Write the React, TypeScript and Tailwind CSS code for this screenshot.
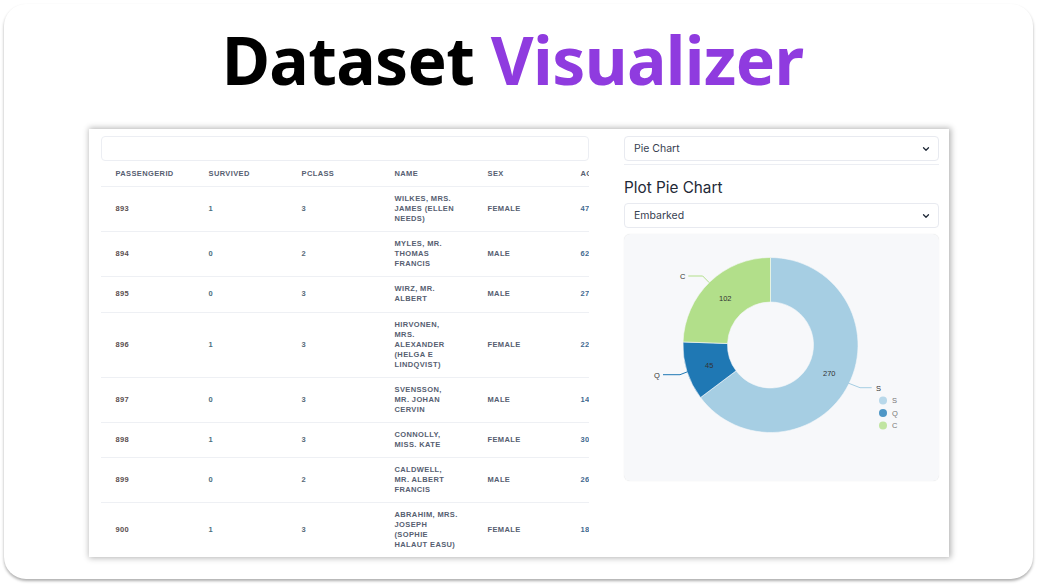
import { ChevronDown } from "lucide-react";

type Row = { id: number; survived: number; pclass: number; name: string[]; sex: string; age: number };

const rows: Row[] = [
  { id: 893, survived: 1, pclass: 3, name: ["WILKES, MRS.", "JAMES (ELLEN", "NEEDS)"], sex: "FEMALE", age: 47 },
  { id: 894, survived: 0, pclass: 2, name: ["MYLES, MR.", "THOMAS", "FRANCIS"], sex: "MALE", age: 62 },
  { id: 895, survived: 0, pclass: 3, name: ["WIRZ, MR.", "ALBERT"], sex: "MALE", age: 27 },
  { id: 896, survived: 1, pclass: 3, name: ["HIRVONEN,", "MRS.", "ALEXANDER", "(HELGA E", "LINDQVIST)"], sex: "FEMALE", age: 22 },
  { id: 897, survived: 0, pclass: 3, name: ["SVENSSON,", "MR. JOHAN", "CERVIN"], sex: "MALE", age: 14 },
  { id: 898, survived: 1, pclass: 3, name: ["CONNOLLY,", "MISS. KATE"], sex: "FEMALE", age: 30 },
  { id: 899, survived: 0, pclass: 2, name: ["CALDWELL,", "MR. ALBERT", "FRANCIS"], sex: "MALE", age: 26 },
  { id: 900, survived: 1, pclass: 3, name: ["ABRAHIM, MRS.", "JOSEPH", "(SOPHIE", "HALAUT EASU)"], sex: "FEMALE", age: 18 },
];

const headers = ["PASSENGERID", "SURVIVED", "PCLASS", "NAME", "SEX", "AGE"];

const rowClass =
  "grid grid-cols-[repeat(6,93px)] w-[558px] items-center border-b border-[#eef0f4] pl-[14.5px] py-[7.1px] text-[7.5px] font-bold leading-[10px] tracking-[0.05em]";

// center of the donut in panel coordinates
const CX = 146.5;
const CY = 111;
const R = 87.5;
const r = 43;

function arc(startDeg: number, endDeg: number) {
  const p = (rad: number, deg: number) => {
    const a = ((deg - 90) * Math.PI) / 180;
    return `${(CX + rad * Math.cos(a)).toFixed(2)} ${(CY + rad * Math.sin(a)).toFixed(2)}`;
  };
  const large = endDeg - startDeg > 180 ? 1 : 0;
  return `M${p(R, startDeg)} A${R} ${R} 0 ${large} 1 ${p(R, endDeg)} L${p(r, endDeg)} A${r} ${r} 0 ${large} 0 ${p(r, startDeg)} Z`;
}

function Donut() {
  const labelFont = { fontFamily: "'Liberation Sans', sans-serif", fontSize: 7.5 };
  return (
    <svg viewBox="0 0 315 247" className="block h-full w-full">
      <path d={arc(0, 233.1)} fill="#a6cee3" stroke="#f7f8fa" strokeWidth="0.6" />
      <path d={arc(233.1, 272)} fill="#1f78b4" stroke="#f7f8fa" strokeWidth="0.6" />
      <path d={arc(272, 360)} fill="#b2df8a" stroke="#f7f8fa" strokeWidth="0.6" />

      <polyline points="224,149 236,153.7 247.7,153.7" fill="none" stroke="#a6cee3" strokeWidth="1" />
      <polyline points="63.7,137.7 56,140.7 39,140.7" fill="none" stroke="#1f78b4" strokeWidth="1" />
      <polyline points="85.3,48.7 78.7,42 64.3,42" fill="none" stroke="#b2df8a" strokeWidth="1" />

      <g fill="#333333" style={labelFont}>
        <text x="252" y="156.5">S</text>
        <text x="30" y="143.5">Q</text>
        <text x="56" y="44.5">C</text>
        <text x="199" y="141.5">270</text>
        <text x="81" y="133.5">45</text>
        <text x="95" y="66.5">102</text>
      </g>

      <circle cx="259" cy="166.5" r="4" fill="#b8d8ea" />
      <circle cx="259" cy="179" r="4" fill="#4f97c6" />
      <circle cx="259" cy="191.5" r="4" fill="#c1e5a1" />
      <g fill="#777777" style={labelFont}>
        <text x="268" y="169.3">S</text>
        <text x="268" y="181.8">Q</text>
        <text x="268" y="194.3">C</text>
      </g>
    </svg>
  );
}

function Select({ label }: { label: string }) {
  return (
    <div className="flex h-[25px] items-center justify-between rounded-[4px] border border-[#e8eaf0] bg-white pl-[9px] pr-[7px] text-[10.5px] text-[#374151]">
      <span>{label}</span>
      <ChevronDown size={10} strokeWidth={3} className="text-[#1f2937]" />
    </div>
  );
}

export default function App() {
  return (
    <div className="h-[587px] w-[1037px] overflow-hidden bg-white pl-[4px] pt-[4px]">
      <div className="flex h-[575px] w-[1029px] flex-col rounded-[22px] bg-white shadow-[0_2px_3px_rgba(0,0,0,0.32)]">
        <h1 className="flex h-[125px] items-center justify-center pb-[16px] pr-[12px] text-[66px] font-bold leading-none tracking-[-0.65px] text-black [font-family:'Noto_Sans',sans-serif]">
          Dataset&nbsp;<span className="text-[#8f3bdf]">Visualizer</span>
        </h1>

        <div className="ml-[85px] flex h-[428px] w-[860px] gap-[35px] overflow-hidden bg-white pl-[12px] pt-[7px] shadow-[1px_0_6px_1px_rgba(0,0,0,0.3)]">
          <div className="w-[488px] shrink-0 overflow-hidden [font-family:'Liberation_Sans',sans-serif]">
            <div className="h-[25px] rounded-[4px] border border-[#eceef3]" />
            <div className={`${rowClass} h-[26px] text-[#566071]`}>
              {headers.map((h) => (
                <div key={h}>{h}</div>
              ))}
            </div>
            {rows.map((row) => (
              <div key={row.id} className={`${rowClass} text-[#566071]`}>
                <div className="text-[#5b4f50]">{row.id}</div>
                <div className="text-[#4a7080]">{row.survived}</div>
                <div className="text-[#566a78]">{row.pclass}</div>
                <div>
                  {row.name.map((line) => (
                    <div key={line}>{line}</div>
                  ))}
                </div>
                <div>{row.sex}</div>
                <div className="text-[#3f6a90]">{row.age}</div>
              </div>
            ))}
          </div>

          <div className="w-[315px] shrink-0 [font-family:'Inter',sans-serif]">
            <Select label="Pie Chart" />
            <div className="mt-[3px] border-t border-[#eceef3]" />
            <h2 className="mb-[5px] mt-[13px] text-[15.3px] font-normal leading-[20px] text-[#1f2937]">Plot Pie Chart</h2>
            <Select label="Embarked" />
            <div className="mt-[6px] h-[247px] rounded-[6px] bg-[#f7f8fa] shadow-[0_0_1px_rgba(0,0,0,0.15)]">
              <Donut />
            </div>
          </div>
        </div>
      </div>
    </div>
  );
}
